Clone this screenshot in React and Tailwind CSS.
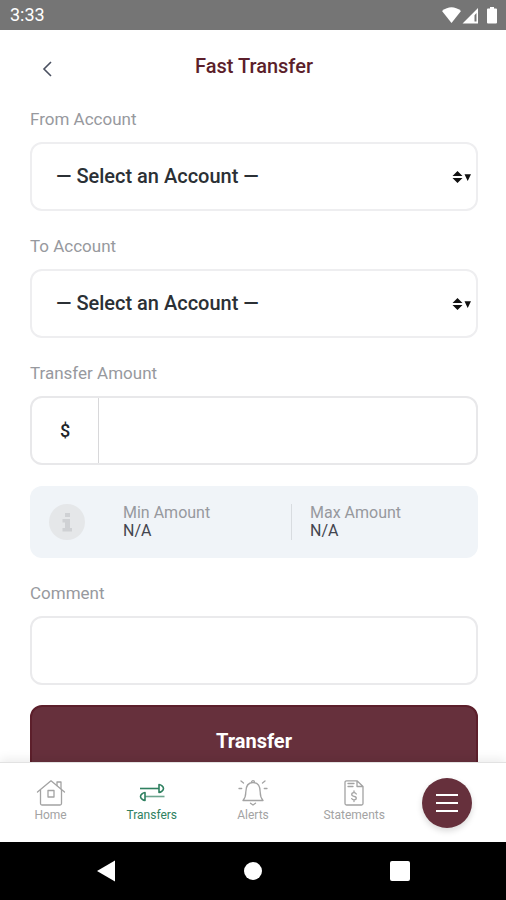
const Field = ({ label, id, className, children }) => {
  return (
    <div className={`flex flex-col gap-[11px] ${className || ""}`}>
      <label htmlFor={id} className="text-[17px] leading-6 text-[#97999e]">
        {label}
      </label>
      {children}
    </div>
  );
};

const AccountSelect = ({ id }) => {
  return (
    <div className="relative">
      <select
        id={id}
        className="block h-[69px] w-full appearance-none rounded-xl border-2 border-[#eeeef0] bg-white pb-[2px] pl-6 pr-10 text-[20px] font-medium text-[#2b3035] outline-none"
      >
        <option>— Select an Account —</option>
      </select>
      <svg
        viewBox="0 0 20 14"
        className="pointer-events-none absolute inset-y-0 right-[6px] my-auto h-[14px] w-5"
        fill="#111"
      >
        <path d="M5.500 1 10.500 6H.5zM5.500 13 .5 8h10z" />
        <path d="M12.500 4.200h6.500L15.700 11z" />
      </svg>
    </div>
  );
};

const Limit = ({ label, value }) => {
  return (
    <div className="flex-1">
      <p className="text-[16px] leading-[18px] text-[#97999e]">{label}</p>
      <p className="text-[16px] leading-[18px] text-[#43454f]">{value}</p>
    </div>
  );
};

const HomeIcon = () => (
  <svg viewBox="0 0 30 28" className="h-7 w-[30px]" fill="none" stroke="currentColor" strokeWidth="1.3" strokeLinejoin="round" strokeLinecap="round">
    <path d="M1.500 13 15 1.800 28.500 13" />
    <path d="M4.500 11v13.500a1.500 1.500 0 0 0 1.500 1.500h18a1.500 1.500 0 0 0 1.500-1.500V11" />
    <path d="M21 6.500V3h4v6.800" />
    <path d="M12 11.500h6v6.500h-6z" />
  </svg>
);

const TransfersIcon = () => (
  <svg viewBox="0 0 30 28" className="h-7 w-[30px]" fill="none" stroke="currentColor" strokeWidth="1.600" strokeLinejoin="round">
    <path d="M3 9.500h19" />
    <path d="M22 5.500v8c2 0 4.500-2.200 4.500-4s-2.500-4-4.500-4z" />
    <path d="M27.500 17.500H8" opacity="0.7" />
    <path d="M8 13.500v8c-2 0-4.500-2.200-4.500-4s2.500-4 4.500-4z" />
  </svg>
);

const AlertsIcon = () => (
  <svg viewBox="0 0 30 28" className="h-7 w-[30px]" fill="none" stroke="currentColor" strokeWidth="1.3" strokeLinejoin="round" strokeLinecap="round">
    <path d="M5 21.500c2.200-2.500 2.800-4.500 2.800-8.500C7.800 7 10.500 3.500 15 3.500S22.200 7 22.200 13c0 4 .6 6 2.800 8.500z" />
    <path d="M13.500 3.200a1.500 1.500 0 0 1 3 0M12.500 24.200 15 26l2.500-1.800" />
    <path d="M3 2 5.500 4M27 2 24.500 4M1 9.500H3.700M29 9.500h-2.700" />
  </svg>
);

const StatementsIcon = () => (
  <svg viewBox="0 0 30 28" className="h-7 w-[30px]" fill="none" stroke="currentColor" strokeWidth="1.3" strokeLinejoin="round" strokeLinecap="round">
    <path d="M18 1.800H7.500A1.500 1.500 0 0 0 6 3.300V24.500A1.500 1.500 0 0 0 7.500 26h15a1.500 1.500 0 0 0 1.500-1.500V7.500zM18 1.800V7.500h6" />
    <path d="M9 4.500h6M9 7.500h5" />
    <path d="M17.300 15c-.5-1-1.300-1.300-2.300-1.300-2.800 0-3.200 3.200 0 3.600 3.200.4 2.800 3.600 0 3.600-1 0-1.900-.4-2.300-1.300M15 12v1.700M15 20.900v1.700" />
  </svg>
);

const tabs = [
  { label: "Home", Icon: HomeIcon },
  { label: "Transfers", Icon: TransfersIcon, active: true },
  { label: "Alerts", Icon: AlertsIcon },
  { label: "Statements", Icon: StatementsIcon },
];

const StatusBar = () => (
  <div className="flex h-[30px] shrink-0 items-center justify-between bg-[#757575] pl-[10px] pr-2 text-white">
    <span className="text-[18px] leading-6">3:33</span>
    <svg viewBox="0 0 56 18" className="h-[18px] w-14" fill="#fff">
      <path d="M0 5Q9.500-2.500 19 5L9.500 17z" />
      <path fillRule="evenodd" d="M36 2v15.500H20.500zM34.500 7v8.500H32.500V9.300z" />
      <path d="M46 2.500h2V1h4v1.500h2q1 0 1 1v13q0 1-1 1h-8q-1 0-1-1v-13q0-1 1-1z" />
    </svg>
  </div>
);

const BottomNav = () => (
  <nav className="relative grid h-20 shrink-0 grid-cols-5 border-t border-[#e2e2e2] bg-white shadow-[0_-3px_10px_rgba(0,0,0,0.08)]">
    {tabs.map(({ label, Icon, active }) => (
      <a
        key={label}
        href="#"
        className={`flex flex-col items-center pt-4 ${
          active ? "text-[#2f8060]" : "text-[#a3a3a3]"
        }`}
      >
        <Icon />
        <span className="text-[12px] leading-4">{label}</span>
      </a>
    ))}
    <div className="flex items-center justify-center pr-4">
      <button
        type="button"
        aria-label="Menu"
        className="flex h-[50px] w-[50px] items-center justify-center rounded-full bg-[#66303c] shadow-[0_3px_6px_rgba(0,0,0,0.15)]"
      >
        <svg viewBox="0 0 22 18" className="h-[18px] w-[22px]" stroke="#fff" strokeWidth="2">
          <path d="M0 1h22M0 9h22M0 17h22" />
        </svg>
      </button>
    </div>
  </nav>
);

const SystemBar = () => (
  <div className="flex h-[58px] shrink-0 items-center justify-between bg-black px-24">
    <button type="button" aria-label="Back">
      <svg viewBox="0 0 20 22" className="h-[22px] w-5" fill="#fff">
        <path d="M1 11 19 .5v21z" />
      </svg>
    </button>
    <button type="button" aria-label="Home" className="h-[18px] w-[18px] rounded-full bg-white" />
    <button type="button" aria-label="Recent apps" className="h-5 w-5 rounded-xs bg-white" />
  </div>
);

export default function App() {
  return (
    <div className="flex h-screen flex-col bg-white font-['Roboto',sans-serif]">
      <StatusBar />
      <main className="flex-1 overflow-hidden pl-[30px] pr-7">
        <header className="grid h-[77px] grid-cols-[36px_1fr_36px] items-center">
          <button type="button" aria-label="Go back" className="pl-3">
            <svg viewBox="0 0 10 16" className="h-4 w-[10px]" fill="none" stroke="#4a5060" strokeWidth="1.6">
              <path d="M9 1 2 8l7 7" />
            </svg>
          </button>
          <h1 className="pb-[6px] text-center text-[20px] font-medium leading-6 text-[#5c1f2b]">
            Fast Transfer
          </h1>
        </header>

        <form>
          <Field label="From Account" id="from">
            <AccountSelect id="from" />
          </Field>
          <Field label="To Account" id="to" className="mt-[23px]">
            <AccountSelect id="to" />
          </Field>
          <Field label="Transfer Amount" id="amount" className="mt-[23px]">
            <div className="flex h-[69px] overflow-hidden rounded-xl border-2 border-[#e8e8ea]">
              <span className="flex w-[67px] shrink-0 items-center justify-center border-r border-[#d8d8da] text-[18px] font-medium text-[#212529]">
                $
              </span>
              <input id="amount" type="text" className="w-full min-w-0 px-4 text-[18px] outline-none" />
            </div>
          </Field>

          <div className="mt-[21px] flex h-[72px] items-center rounded-xl bg-[#f0f4f8] pl-[19px]">
            <svg viewBox="0 0 36 36" className="mr-[38px] h-9 w-9 shrink-0">
              <circle cx="18" cy="18" r="18" fill="#e5e7e9" />
              <path d="M16 9h5v4h-5zM13.500 15H21v9h2v3.500h-9.500V24H16v-5.500h-2.500z" fill="#cfd1d4" />
            </svg>
            <Limit label="Min Amount" value="N/A" />
            <div className="mr-[18px] h-9 w-px bg-[#d8dce0]" />
            <Limit label="Max Amount" value="N/A" />
          </div>

          <Field label="Comment" id="comment" className="mt-[23px]">
            <input
              id="comment"
              type="text"
              className="h-[69px] rounded-xl border-2 border-[#eaeaec] px-6 text-[18px] outline-none"
            />
          </Field>

          <button
            type="button"
            className="mt-5 h-[72px] w-full rounded-xl border-2 border-[#5c1f2b] bg-[#66303c] text-[20px] font-bold text-white"
          >
            Transfer
          </button>
        </form>
      </main>
      <BottomNav />
      <SystemBar />
    </div>
  );
}
